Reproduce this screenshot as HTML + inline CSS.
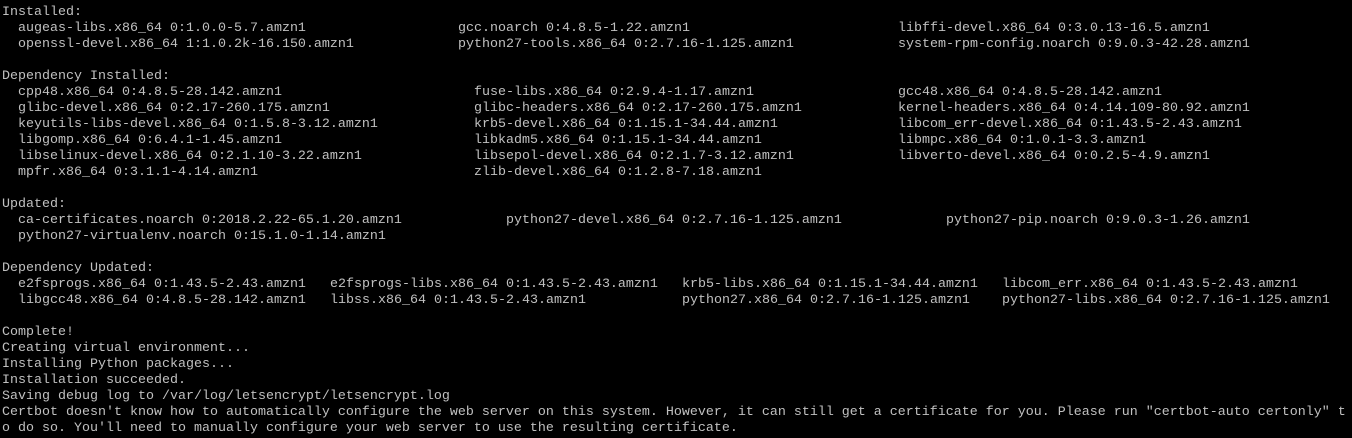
<!DOCTYPE html>
<html><head><meta charset="utf-8"><style>
html,body{margin:0;padding:0;background:#000;width:1352px;height:438px;overflow:hidden}
.t{position:absolute;left:2px;top:5px;font-family:"Liberation Mono",monospace;font-size:13.33px;line-height:16px;color:#c0c0c0}
.r{position:relative;height:16px}
.r span{position:absolute;top:0;white-space:pre}
</style></head><body><div class="t"><div class="r"><span style="left:0">Installed:</span></div><div class="r"><span style="left:16px">augeas-libs.x86_64 0:1.0.0-5.7.amzn1</span><span style="left:456px">gcc.noarch 0:4.8.5-1.22.amzn1</span><span style="left:896px">libffi-devel.x86_64 0:3.0.13-16.5.amzn1</span></div><div class="r"><span style="left:16px">openssl-devel.x86_64 1:1.0.2k-16.150.amzn1</span><span style="left:456px">python27-tools.x86_64 0:2.7.16-1.125.amzn1</span><span style="left:896px">system-rpm-config.noarch 0:9.0.3-42.28.amzn1</span></div><div class="r"></div><div class="r"><span style="left:0">Dependency Installed:</span></div><div class="r"><span style="left:16px">cpp48.x86_64 0:4.8.5-28.142.amzn1</span><span style="left:472px">fuse-libs.x86_64 0:2.9.4-1.17.amzn1</span><span style="left:896px">gcc48.x86_64 0:4.8.5-28.142.amzn1</span></div><div class="r"><span style="left:16px">glibc-devel.x86_64 0:2.17-260.175.amzn1</span><span style="left:472px">glibc-headers.x86_64 0:2.17-260.175.amzn1</span><span style="left:896px">kernel-headers.x86_64 0:4.14.109-80.92.amzn1</span></div><div class="r"><span style="left:16px">keyutils-libs-devel.x86_64 0:1.5.8-3.12.amzn1</span><span style="left:472px">krb5-devel.x86_64 0:1.15.1-34.44.amzn1</span><span style="left:896px">libcom_err-devel.x86_64 0:1.43.5-2.43.amzn1</span></div><div class="r"><span style="left:16px">libgomp.x86_64 0:6.4.1-1.45.amzn1</span><span style="left:472px">libkadm5.x86_64 0:1.15.1-34.44.amzn1</span><span style="left:896px">libmpc.x86_64 0:1.0.1-3.3.amzn1</span></div><div class="r"><span style="left:16px">libselinux-devel.x86_64 0:2.1.10-3.22.amzn1</span><span style="left:472px">libsepol-devel.x86_64 0:2.1.7-3.12.amzn1</span><span style="left:896px">libverto-devel.x86_64 0:0.2.5-4.9.amzn1</span></div><div class="r"><span style="left:16px">mpfr.x86_64 0:3.1.1-4.14.amzn1</span><span style="left:472px">zlib-devel.x86_64 0:1.2.8-7.18.amzn1</span></div><div class="r"></div><div class="r"><span style="left:0">Updated:</span></div><div class="r"><span style="left:16px">ca-certificates.noarch 0:2018.2.22-65.1.20.amzn1</span><span style="left:504px">python27-devel.x86_64 0:2.7.16-1.125.amzn1</span><span style="left:944px">python27-pip.noarch 0:9.0.3-1.26.amzn1</span></div><div class="r"><span style="left:16px">python27-virtualenv.noarch 0:15.1.0-1.14.amzn1</span></div><div class="r"></div><div class="r"><span style="left:0">Dependency Updated:</span></div><div class="r"><span style="left:16px">e2fsprogs.x86_64 0:1.43.5-2.43.amzn1</span><span style="left:328px">e2fsprogs-libs.x86_64 0:1.43.5-2.43.amzn1</span><span style="left:680px">krb5-libs.x86_64 0:1.15.1-34.44.amzn1</span><span style="left:1000px">libcom_err.x86_64 0:1.43.5-2.43.amzn1</span></div><div class="r"><span style="left:16px">libgcc48.x86_64 0:4.8.5-28.142.amzn1</span><span style="left:328px">libss.x86_64 0:1.43.5-2.43.amzn1</span><span style="left:680px">python27.x86_64 0:2.7.16-1.125.amzn1</span><span style="left:1000px">python27-libs.x86_64 0:2.7.16-1.125.amzn1</span></div><div class="r"></div><div class="r"><span style="left:0">Complete!</span></div><div class="r"><span style="left:0">Creating virtual environment...</span></div><div class="r"><span style="left:0">Installing Python packages...</span></div><div class="r"><span style="left:0">Installation succeeded.</span></div><div class="r"><span style="left:0">Saving debug log to /var/log/letsencrypt/letsencrypt.log</span></div><div class="r"><span style="left:0">Certbot doesn't know how to automatically configure the web server on this system. However, it can still get a certificate for you. Please run "certbot-auto certonly" t</span></div><div class="r"><span style="left:0">o do so. You'll need to manually configure your web server to use the resulting certificate.</span></div></div></body></html>
